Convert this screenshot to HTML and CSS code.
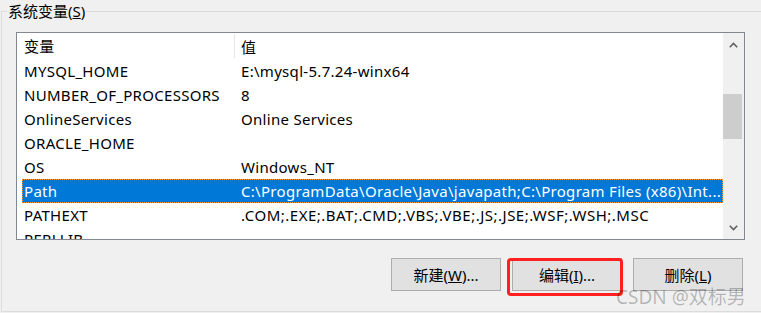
FILE: index.html
```html
<html>
  <head>
    <meta http-equiv="content-type" content="text/html;charset=UTF8">
    <link rel="stylesheet" href="styles.css">
    <title>系统变量</title>
  </head>
  <body>
    <fieldset class="group">
      <legend class="group_title">系统变量(<u>S</u>)</legend>
      <!-- variable list -->
      <div class="list">
        <div class="rows">
          <div class="head">
            <div class="head_name">变量</div>
            <div class="head_value">值</div>
          </div>
          <div class="row"><div class="name">MYSQL_HOME</div><div class="value">E:\mysql-5.7.24-winx64</div></div>
          <div class="row"><div class="name">NUMBER_OF_PROCESSORS</div><div class="value">8</div></div>
          <div class="row"><div class="name">OnlineServices</div><div class="value">Online Services</div></div>
          <div class="row"><div class="name">ORACLE_HOME</div><div class="value"></div></div>
          <div class="row"><div class="name">OS</div><div class="value">Windows_NT</div></div>
          <div class="row selected"><div class="name">Path</div><div class="value">C:\ProgramData\Oracle\Java\javapath;C:\Program Files (x86)\Int...</div></div>
          <div class="row"><div class="name">PATHEXT</div><div class="value wide">.COM;.EXE;.BAT;.CMD;.VBS;.VBE;.JS;.JSE;.WSF;.WSH;.MSC</div></div>
          <div class="row"><div class="name">PERLLIB</div><div class="value"></div></div>
        </div>
        <div class="scrollbar">
          <div class="arrow">
            <svg width="9" height="6" viewBox="0 0 9 6"><polyline points="0.8,5.2 4.5,1.5 8.2,5.2" fill="none" stroke="#606060" stroke-width="1.6"/></svg>
          </div>
          <div class="track"><div class="thumb"></div></div>
          <div class="arrow">
            <svg width="9" height="6" viewBox="0 0 9 6"><polyline points="0.8,0.8 4.5,4.5 8.2,0.8" fill="none" stroke="#606060" stroke-width="1.6"/></svg>
          </div>
        </div>
      </div>
      <div class="actions">
        <button class="btn">新建(<u>W</u>)...</button>
        <button class="btn">编辑(<u>I</u>)...</button>
        <button class="btn">删除(<u>L</u>)</button>
      </div>
    </fieldset>
    <!-- annotation + watermark -->
    <div class="mark"></div>
    <div class="watermark">CSDN @双标男</div>
  </body>
</html>
```

FILE: styles.css
```css
body{
  margin: 0;
  width: 761px;
  height: 313px;
  overflow: hidden;
  position: relative;
  background: #f0f0f0;
  font-family: "Noto Sans", "Noto Sans CJK SC", sans-serif;
  font-size: 15px;
  color: #000;
}
.group{
  box-sizing: border-box;
  margin: 0 0 0 1px;
  padding: 0;
  width: 800px;
  height: 312px;
  border: 1px solid #dcdcdc;
}
.group_title{
  margin-left: 5px;
  padding: 0 1px;
  line-height: 22px;
}
.list{
  box-sizing: border-box;
  display: flex;
  margin: 10px 0 0 14px;
  width: 729px;
  height: 208px;
  border: 1px solid #828790;
  background: #fff;
}
.rows{
  flex: 1;
  overflow: hidden;
  letter-spacing: 0.3px;
}
.head{
  display: flex;
  height: 26px;
  line-height: 26px;
}
.head_name{
  width: 210px;
  padding-left: 7px;
  border-right: 1px solid #e5e5e5;
  margin: 1px 0;
  line-height: 25px;
}
.head_value{
  padding-left: 6px;
  line-height: 28px;
}
.row{
  box-sizing: border-box;
  display: flex;
  margin-left: 5px;
  height: 24px;
  line-height: 25px;
  white-space: nowrap;
}
.name{
  width: 215px;
  padding-left: 2px;
}
.value{
  padding-left: 2px;
}
.wide{
  letter-spacing: 0.5px;
}
.selected{
  background: #0078d7;
  color: #fff;
  border: 1px dotted #ff9a2e;
  line-height: 23px;
}
.selected .name{
  padding-left: 1px;
}
.scrollbar{
  width: 21px;
  display: flex;
  flex-direction: column;
  background: #f0f0f0;
}
.arrow{
  height: 23px;
  display: flex;
  align-items: center;
  justify-content: center;
  padding-right: 1px;
}
.track{
  flex: 1;
}
.thumb{
  margin-top: 38px;
  width: 19px;
  height: 45px;
  background: #cdcdcd;
}
.actions{
  display: flex;
  justify-content: flex-end;
  gap: 11px;
  width: 729px;
  margin: 18px 0 0 14px;
  padding-right: 2px;
  box-sizing: border-box;
}
.btn{
  width: 110px;
  height: 33px;
  border: 1px solid #adadad;
  background: #e1e1e1;
  font-family: "Noto Sans", "Noto Sans CJK SC", sans-serif;
  font-size: 15px;
  color: #000;
  padding: 0;
}
.mark{
  position: absolute;
  left: 507px;
  top: 258px;
  width: 116px;
  height: 38px;
  box-sizing: border-box;
  border: 3px solid #ff2020;
  border-radius: 4px;
}
.watermark{
  position: absolute;
  left: 616px;
  top: 287px;
  font-size: 19px;
  line-height: 20px;
  color: rgba(0, 0, 0, 0.26);
  white-space: nowrap;
}
```
